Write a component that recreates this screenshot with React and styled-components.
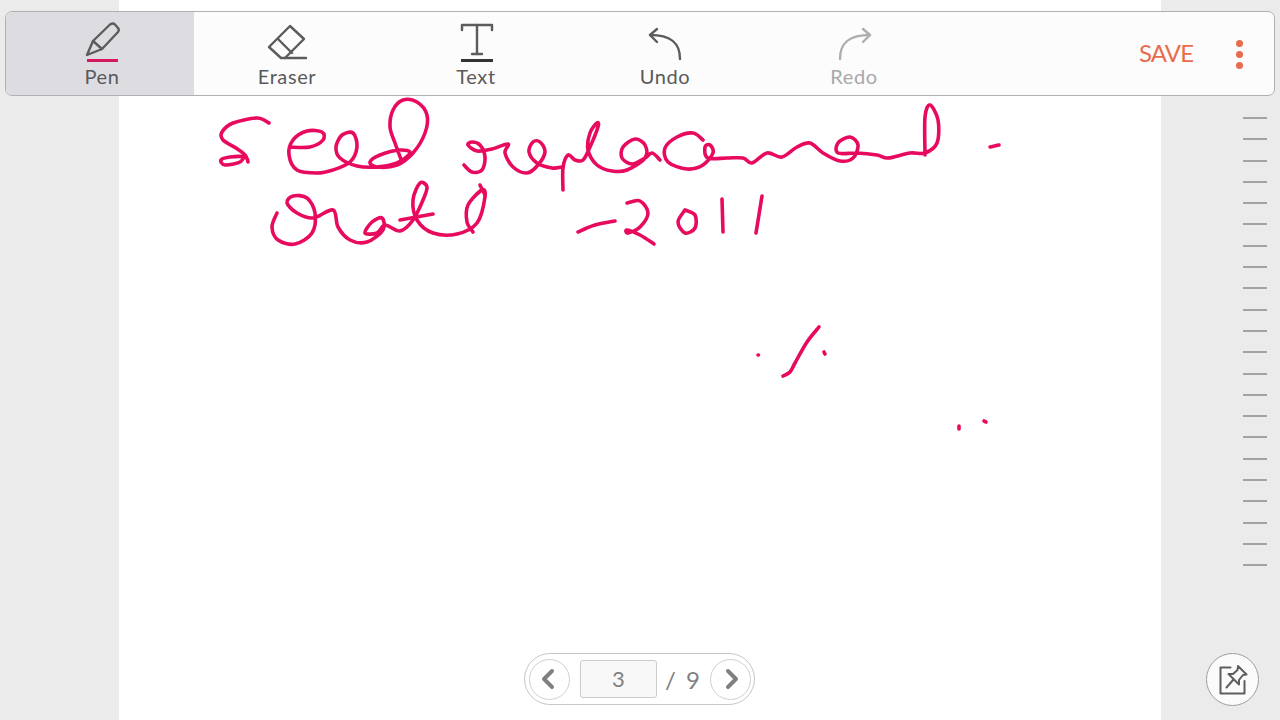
import React from "react";
import styled, { createGlobalStyle } from "styled-components";

const GlobalStyle = createGlobalStyle`
  html, body {
    margin: 0;
    padding: 0;
    background: #ebebeb;
    font-family: "Lato", "Liberation Sans", sans-serif;
    overflow: hidden;
  }
`;

const Page = styled.div`
  position: relative;
  display: grid;
  grid-template-columns: 119px 1042px 119px;
  width: 1280px;
  height: 720px;
  background: #ebebeb;
`;

const Sheet = styled.main`
  background: #ffffff;
  height: 720px;
`;

const Ink = styled.svg`
  display: block;
  width: 1042px;
  height: 720px;
  fill: none;
  stroke: #e80a5e;
  stroke-width: 3.6;
  stroke-linecap: round;
  stroke-linejoin: round;
`;

const Ruler = styled.div`
  display: flex;
  flex-direction: column;
  align-items: flex-end;
  gap: 19.3px;
  padding: 117px 13px 0 0;
`;

const Tick = styled.span`
  display: block;
  width: 24px;
  height: 2px;
  background: #a3a3a3;
`;

const Toolbar = styled.header`
  position: absolute;
  left: 5px;
  top: 11px;
  box-sizing: border-box;
  display: flex;
  align-items: stretch;
  width: 1270px;
  height: 85px;
  background: #fcfcfc;
  border: 1px solid #aeb1b4;
  border-radius: 7px;
  overflow: hidden;
`;

const Tool = styled.div`
  position: relative;
  width: ${(p) => (p.$active ? "188px" : "189px")};
  flex: none;
  background: ${(p) => (p.$active ? "#dddde1" : "transparent")};
  color: ${(p) => (p.$disabled ? "#a8a8a8" : "#5a5a5a")};
  text-align: center;
`;

const ToolIcon = styled.svg`
  position: absolute;
  left: 0;
  top: 0;
  width: 189px;
  height: 60px;
  fill: none;
  stroke: ${(p) => (p.$disabled ? "#aeaeae" : "#5c5c5c")};
  stroke-width: 2.4;
  stroke-linecap: round;
  stroke-linejoin: round;
`;

const ToolLabel = styled.span`
  position: absolute;
  left: ${(p) => (p.$active ? "4px" : "0")};
  right: ${(p) => (p.$active ? "0" : "3px")};
  top: 53px;
  font-size: 20px;
  line-height: 23px;
  letter-spacing: 0.6px;
`;

const Actions = styled.div`
  display: flex;
  align-items: center;
  flex: 1;
  padding: 0 0 0 189px;
`;

const Save = styled.span`
  color: #e86c4c;
  font-size: 24px;
  line-height: 28px;
  letter-spacing: -0.9px;
  margin-top: -1px;
`;

const Dots = styled.div`
  display: flex;
  flex-direction: column;
  gap: 4px;
  margin: 2px 0 0 43px;
`;

const Dot = styled.span`
  display: block;
  width: 7px;
  height: 7px;
  border-radius: 50%;
  background: #e86c4c;
`;

const Pager = styled.nav`
  position: absolute;
  left: 524px;
  top: 653px;
  box-sizing: border-box;
  display: flex;
  align-items: center;
  width: 231px;
  height: 52px;
  padding: 0 3px 0 4px;
  background: #ffffff;
  border: 1px solid #c6c6c6;
  border-radius: 26px;
`;

const PageButton = styled.div`
  box-sizing: border-box;
  display: flex;
  align-items: center;
  justify-content: center;
  flex: none;
  width: 41px;
  height: 41px;
  border: 1px solid #cfcfcf;
  border-radius: 50%;
  color: #808080;
`;

const PageInput = styled.div`
  box-sizing: border-box;
  flex: none;
  width: 77px;
  height: 38px;
  margin-left: 10px;
  background: #f8f8f8;
  border: 1px solid #cccccc;
  border-radius: 3px;
  color: #808080;
  font-size: 22px;
  line-height: 36px;
  text-align: center;
`;

const PageTotal = styled.span`
  flex: none;
  width: 53px;
  padding-left: 8px;
  box-sizing: border-box;
  color: #808080;
  font-size: 24px;
  letter-spacing: 2px;
  white-space: nowrap;
`;

const PinButton = styled.div`
  position: absolute;
  left: 1206px;
  top: 653px;
  box-sizing: border-box;
  display: flex;
  align-items: center;
  justify-content: center;
  width: 53px;
  height: 53px;
  background: #fbfbfb;
  border: 1px solid #9e9e9e;
  border-radius: 50%;
`;

// turns a list of pen points into a smooth line
const smooth = (pts) => {
  let d = `M${pts[0][0]} ${pts[0][1]}`;
  for (let i = 0; i < pts.length - 1; i++) {
    const p0 = pts[i - 1] || pts[i];
    const p1 = pts[i];
    const p2 = pts[i + 1];
    const p3 = pts[i + 2] || p2;
    const c1x = p1[0] + (p2[0] - p0[0]) / 6;
    const c1y = p1[1] + (p2[1] - p0[1]) / 6;
    const c2x = p2[0] - (p3[0] - p1[0]) / 6;
    const c2y = p2[1] - (p3[1] - p1[1]) / 6;
    d += ` C${c1x.toFixed(1)} ${c1y.toFixed(1)} ${c2x.toFixed(1)} ${c2y.toFixed(1)} ${p2[0]} ${p2[1]}`;
  }
  return d;
};

const strokes = [
  // first letter
  [[269,123],[257,118],[233,123],[222,132],[223,140],[236,148],[245,155],[248,162],[245,157],[230,157],[221,160],[225,165],[240,162],[245,155]],
  // eed
  [[290,147],[310,147],[323,140],[322,132],[307,131],[293,140],[289,155],[297,170],[317,173],[333,170],[350,162],[357,147],[353,133],[342,135],[336,147],[340,158],[357,166],[377,167],[397,163],[410,153],[400,150],[380,155],[370,162],[377,167],[397,165],[413,153],[425,133],[427,115],[417,102],[403,100],[393,110],[390,127],[395,143],[402,162]],
  // re and p stem
  [[464,165],[472,172],[482,170],[485,157],[480,145],[472,142],[468,145],[477,151],[492,149],[508,144],[505,153],[513,167],[527,173],[538,165],[545,152],[540,142],[533,142],[529,152],[537,163],[552,168],[562,167]],
  [[563,190],[563,168],[568,155],[575,160],[583,160],[590,147],[598,127],[597,123],[590,133],[588,150],[597,165],[612,171],[627,170],[645,158],[645,145],[635,139],[623,147],[622,158],[632,164],[645,158],[652,153],[660,160]],
  // rest of the word
  [[703,140],[693,133],[677,137],[665,148],[668,162],[687,169],[703,165],[713,153],[710,145],[705,147],[708,158],[727,158],[743,158],[752,163],[767,153],[782,157],[797,147],[810,143],[823,153],[840,161],[853,158],[858,145],[850,137],[838,143],[838,153],[857,153],[877,155],[888,158],[910,153],[925,153],[937,143],[938,120],[930,105],[925,117],[925,155]],
  [[990,147],[999,145]],
  // second line
  [[277,213],[272,227],[278,240],[295,244],[312,233],[315,213],[307,198],[293,196],[287,203],[297,213],[313,218],[333,210],[338,227],[350,240],[367,242],[383,230],[382,218],[372,222],[365,233],[377,233],[385,225],[400,231],[413,220],[423,200],[427,187],[420,183],[413,200],[417,220],[433,233],[457,234],[477,223],[485,197],[482,190],[468,205],[467,222],[473,232]],
  [[400,220],[433,214]],
  [[480,185],[485,195]],
  // -2011
  [[578,232],[595,225],[615,221]],
  [[627,203],[640,201],[648,213],[640,227],[628,233],[627,230],[640,235],[654,244]],
  [[685,210],[678,222],[685,233],[695,228],[695,215],[685,210]],
  [[722,199],[723,232]],
  [[762,196],[756,233]],
  // marks further down
  [[819,327],[807,342],[795,363],[790,372],[783,376]],
  [[758,355],[758.5,355]],
  [[824,352],[825,354]],
  [[959,426],[959,429]],
  [[984,421],[986,422]],
];

const tools = [
  {
    label: "Pen",
    active: true,
    icon: (
      <>
        <path d="M81 43L87 29L104 12.5Q107 10.5 109 12.5L112 16Q113.5 18 112 20L96 37Z" />
        <path d="M87 29L96 37" />
      </>
    ),
    bar: { d: "M81 48.5H112", color: "#d8185f" },
  },
  {
    label: "Eraser",
    icon: (
      <>
        <path d="M96 14L110 27L91 46L87 46L75 35Z" />
        <path d="M84 27L98 41" />
        <path d="M91 46L112 46" />
      </>
    ),
  },
  {
    label: "Text",
    icon: (
      <>
        <path d="M79 18V13H109V18" />
        <path d="M94 13V42" />
        <path d="M89 42H99" />
      </>
    ),
    bar: { d: "M78 48.5H110", color: "#333333" },
  },
  {
    label: "Undo",
    icon: (
      <>
        <path d="M78 23C98 23 108 30 108 47" />
        <path d="M85 17L78 23L85 30" />
      </>
    ),
  },
  {
    label: "Redo",
    disabled: true,
    icon: (
      <>
        <path d="M109 23C89 23 79 30 79 47" />
        <path d="M102 17L109 23L102 30" />
      </>
    ),
  },
];

export default function App() {
  return (
    <Page>
      <GlobalStyle />
      <div />
      <Sheet>
        <Ink viewBox="119 0 1042 720">
          {strokes.map((pts, i) => (
            <path key={i} d={smooth(pts)} />
          ))}
        </Ink>
      </Sheet>
      <Ruler>
        {Array.from({ length: 22 }).map((_, i) => (
          <Tick key={i} />
        ))}
      </Ruler>

      <Toolbar>
        {tools.map((t) => (
          <Tool key={t.label} $active={t.active} $disabled={t.disabled}>
            <ToolIcon viewBox="0 0 189 60" $disabled={t.disabled}>
              {t.icon}
              {t.bar && (
                <path d={t.bar.d} stroke={t.bar.color} strokeWidth="3" strokeLinecap="butt" />
              )}
            </ToolIcon>
            <ToolLabel $active={t.active}>{t.label}</ToolLabel>
          </Tool>
        ))}
        <Actions>
          <Save>SAVE</Save>
          <Dots>
            <Dot />
            <Dot />
            <Dot />
          </Dots>
        </Actions>
      </Toolbar>

      <Pager>
        <PageButton>
          <svg width="18" height="24" viewBox="0 0 18 24" fill="none" stroke="currentColor" strokeWidth="4" strokeLinecap="round" strokeLinejoin="round">
            <path d="M11 4L3 12L11 20" />
          </svg>
        </PageButton>
        <PageInput>3</PageInput>
        <PageTotal>/ 9</PageTotal>
        <PageButton>
          <svg width="18" height="24" viewBox="0 0 18 24" fill="none" stroke="currentColor" strokeWidth="4" strokeLinecap="round" strokeLinejoin="round">
            <path d="M6 4L14 12L6 20" />
          </svg>
        </PageButton>
      </Pager>

      <PinButton>
        <svg width="30" height="30" viewBox="0 0 30 30" fill="none" stroke="#5e5e5e" strokeWidth="2" strokeLinecap="round" strokeLinejoin="round">
          <path d="M12.5 2.5H2.5V28.5H26.5V16" />
          <path d="M20 1L28.5 9.5L25 10L21 15L21 19.5L10.5 9L15 9L19.5 5Z" />
          <path d="M15.5 14.5L8.5 22.5" />
        </svg>
      </PinButton>
    </Page>
  );
}
